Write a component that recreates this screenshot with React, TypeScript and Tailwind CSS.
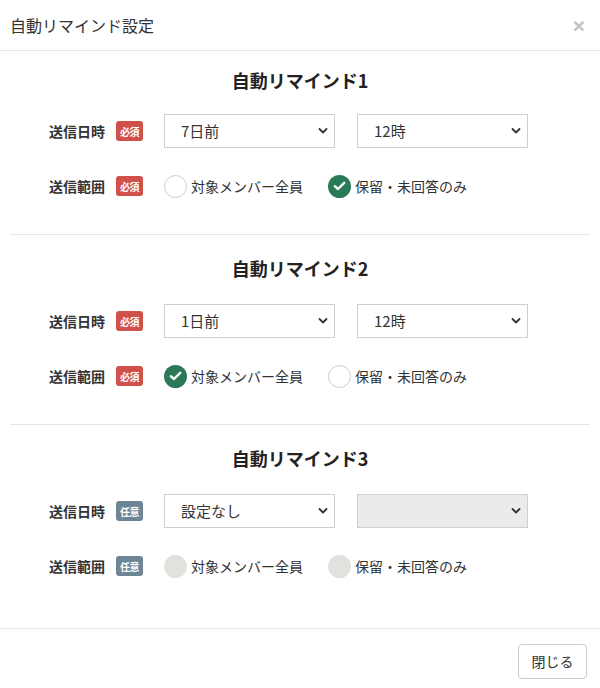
import React from "react";

const FONT = { fontFamily: '"Noto Sans CJK JP", "Noto Sans", sans-serif' };

function Chevron() {
  return (
    <svg width="10" height="7" viewBox="0 0 10 7" className="absolute right-[6px] top-1/2 -translate-y-1/2 pointer-events-none">
      <path d="M1.5 1.5 L5 5 L8.5 1.5" fill="none" stroke="#333" strokeWidth="1.8" strokeLinecap="round" strokeLinejoin="round" />
    </svg>
  );
}

function SelectBox({ value, disabled }: { value: string; disabled?: boolean }) {
  return (
    <div
      className={`relative w-[171px] h-[34px] border border-[#cfcfcf] flex items-center pl-[16px] text-[15px] text-[#333] ${
        disabled ? "bg-[#ebebeb]" : "bg-white"
      }`}
    >
      <span>{value}</span>
      <Chevron />
    </div>
  );
}

type RState = "off" | "on" | "disabled";

function Radio({ state, label }: { state: RState; label: string }) {
  return (
    <div className="flex items-center">
      {state === "on" ? (
        <span className="w-[23px] h-[23px] rounded-full bg-[#2b7a57] flex items-center justify-center">
          <svg width="13" height="10" viewBox="0 0 13 10">
            <path d="M1.8 5.2 L5 8 L11.2 1.8" fill="none" stroke="white" strokeWidth="2.4" strokeLinecap="round" strokeLinejoin="round" />
          </svg>
        </span>
      ) : state === "off" ? (
        <span className="w-[23px] h-[23px] rounded-full bg-white border border-[#cccccc]" />
      ) : (
        <span className="w-[23px] h-[23px] rounded-full bg-[#e2e1de]" />
      )}
      <span className="ml-[4px] text-[14px] text-[#333]">{label}</span>
    </div>
  );
}

function Badge({ kind }: { kind: "req" | "opt" }) {
  return (
    <span
      className={`w-[27px] h-[20px] rounded-[3px] flex items-center justify-center text-white text-[10px] font-bold tracking-[-0.5px] ${
        kind === "req" ? "bg-[#cf5149]" : "bg-[#6e8595]"
      }`}
    >
      {kind === "req" ? "必須" : "任意"}
    </span>
  );
}

function RowLabel({ text, kind }: { text: string; kind: "req" | "opt" }) {
  return (
    <div className="flex items-center w-[115px] shrink-0">
      <span className="w-[67px] text-[14px] font-bold text-[#333]">{text}</span>
      <Badge kind={kind} />
    </div>
  );
}

function Section({
  n,
  first,
  last,
  day,
  hour,
  hourDisabled,
  r1,
  r2,
  kind,
}: {
  n: number;
  first?: boolean;
  last?: boolean;
  day: string;
  hour: string;
  hourDisabled?: boolean;
  r1: RState;
  r2: RState;
  kind: "req" | "opt";
}) {
  return (
    <div className={`${first ? "pt-[17px]" : "pt-[21px]"} ${last ? "pb-[45px]" : "pb-[31px] border-b border-[#e6e6e6]"}`}>
      <div className="h-[24px] flex items-center justify-center text-[18px] font-bold text-[#222]">
        自動リマインド{n}
      </div>
      <div className={`${first ? "mt-[22px]" : "mt-[24px]"} pl-[39px] flex items-center h-[34px]`}>
        <RowLabel text="送信日時" kind={kind} />
        <SelectBox value={day} />
        <div className="w-[22px]" />
        <SelectBox value={hour} disabled={hourDisabled} />
      </div>
      <div className="mt-[21px] pl-[39px] flex items-center h-[34px]">
        <RowLabel text="送信範囲" kind={kind} />
        <div className="flex items-center gap-[25px]">
          <Radio state={r1} label="対象メンバー全員" />
          <Radio state={r2} label="保留・未回答のみ" />
        </div>
      </div>
    </div>
  );
}

export default function App() {
  return (
    <div className="w-[600px] h-[688px] bg-white overflow-hidden" style={FONT}>
      <div className="h-[51px] px-[10px] flex items-center justify-between border-b border-[#e5e5e5]">
        <span className="text-[16px] text-[#333]">自動リマインド設定</span>
        <span
          className="text-[21px] font-bold text-[#c2c2c2] mr-[5px] leading-none"
          style={{ fontFamily: '"Liberation Sans", Arial, sans-serif' }}
        >
          ×
        </span>
      </div>
      <div className="px-[10px]">
        <Section n={1} first day="7日前" hour="12時" r1="off" r2="on" kind="req" />
        <Section n={2} day="1日前" hour="12時" r1="on" r2="off" kind="req" />
        <Section n={3} last day="設定なし" hour="" hourDisabled r1="disabled" r2="disabled" kind="opt" />
      </div>
      <div className="border-t border-[#e5e5e5] pt-[15px] pr-[13px] flex justify-end">
        <button className="w-[69px] h-[35px] rounded-[4px] border border-[#cccccc] bg-white text-[14px] text-[#333]">
          閉じる
        </button>
      </div>
    </div>
  );
}
